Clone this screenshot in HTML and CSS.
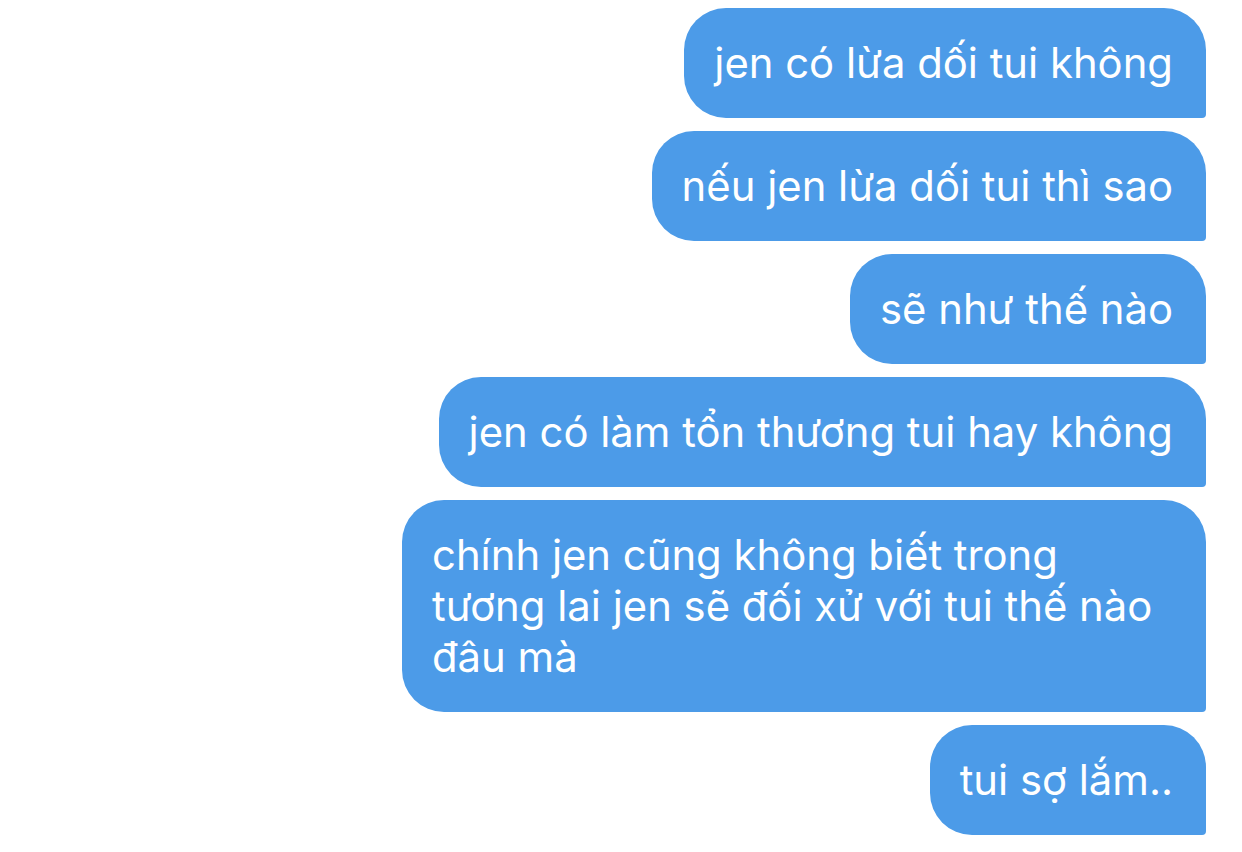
FILE: index.html
```html
<!DOCTYPE html>
<html lang="vi">
<head>
    <meta charset="UTF-8">
    <meta name="viewport" content="width=device-width, initial-scale=1.0">
    <title>Tin nhắn</title>
    <link rel="stylesheet" href="styles.css">
</head>
<body>
<main class="thread">
    <div class="bubble">jen có lừa dối tui không</div>
    <div class="bubble">nếu jen lừa dối tui thì sao</div>
    <div class="bubble">sẽ như thế nào</div>
    <div class="bubble">jen có làm tổn thương tui hay không</div>
    <div class="bubble">chính jen cũng không biết trong tương lai jen sẽ đối xử với tui thế nào đâu mà</div>
    <div class="bubble">tui sợ lắm..</div>
</main>
</body>
</html>
```

FILE: styles.css
```css
* {
    margin: 0;
    padding: 0;
    box-sizing: border-box;
}

body {
    background-color: #fff;
    font-family: Inter, "Noto Sans", sans-serif;
}

.thread {
    display: flex;
    flex-direction: column;
    align-items: flex-end;
    gap: 13px;
    padding: 8px 36px 0 0;
}

.bubble {
    max-width: 804px;
    background-color: #4c9be8;
    color: #fff;
    font-size: 41.8px;
    line-height: 51px;
    padding: 30px 33px 29px 30px;
    border-radius: 42px 42px 4px 42px;
}
```
